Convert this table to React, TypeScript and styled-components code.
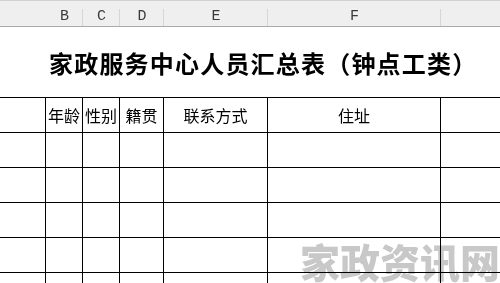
import React from "react";
import styled, { createGlobalStyle } from "styled-components";

const Global = createGlobalStyle`
  html, body { margin: 0; padding: 0; background: #fff; }
  body { width: 500px; height: 283px; overflow: hidden; }
`;

const COLS = "46px 37px 37px 44px 104px 173px 1fr";

const Sheet = styled.div`
  position: relative;
  width: 500px;
  height: 283px;
  overflow: hidden;
  background: #fff;
  font-family: "Noto Sans CJK SC", "Noto Sans", sans-serif;
`;

const ColHeader = styled.div`
  display: grid;
  grid-template-columns: ${COLS};
  height: 25px;
  background: #efefef;
  border-top: 1px solid #d2d2d2;
  border-bottom: 1px solid #a9a9a9;
`;

const ColLabel = styled.div<{ $sep?: boolean }>`
  position: relative;
  display: flex;
  align-items: flex-end;
  justify-content: center;
  padding-bottom: 2px;
  box-sizing: border-box;
  font-family: "Liberation Mono", "Courier New", monospace;
  font-size: 15px;
  line-height: 15px;
  color: #3a3a3a;
  &::after {
    content: "";
    display: ${(p) => (p.$sep ? "block" : "none")};
    position: absolute;
    right: 0;
    top: 8px;
    bottom: 0;
    width: 1px;
    background: #d6d6d6;
  }
`;

const TitleRow = styled.div`
  height: 70px;
  display: flex;
  align-items: center;
  padding: 2px 0 0 49px;
  box-sizing: border-box;
`;

const Title = styled.h1`
  margin: 0;
  font-size: 24px;
  font-weight: 700;
  letter-spacing: 1.2px;
  color: #000;
  white-space: nowrap;
  line-height: 1;
`;

const Table = styled.div`
  border-top: 1px solid #000;
`;

const Row = styled.div`
  display: grid;
  grid-template-columns: ${COLS};
  height: 35px;
  box-sizing: border-box;
  border-bottom: 1px solid #000;
`;

const Cell = styled.div<{ $last?: boolean }>`
  display: flex;
  align-items: center;
  justify-content: center;
  box-sizing: border-box;
  border-right: ${(p) => (p.$last ? "none" : "1px solid #000")};
  font-size: 16px;
  font-weight: 400;
  color: #000;
  white-space: nowrap;
  overflow: hidden;
`;

const Watermark = styled.div`
  position: absolute;
  left: 300px;
  top: 241px;
  font-family: "Noto Sans CJK SC", sans-serif;
  font-size: 40px;
  font-weight: 900;
  line-height: 1;
  color: #c8c8c8;
  white-space: nowrap;
  mix-blend-mode: multiply;
`;

const letters = ["", "B", "C", "D", "E", "F", ""];
const heads = ["", "年龄", "性别", "籍贯", "联系方式", "住址", ""];

export default function App() {
  return (
    <Sheet>
      <Global />
      <ColHeader>
        {letters.map((l, i) => (
          <ColLabel key={i} $sep={i > 0 && i < 6}>
            {l}
          </ColLabel>
        ))}
      </ColHeader>
      <TitleRow>
        <Title>家政服务中心人员汇总表（钟点工类）</Title>
      </TitleRow>
      <Table>
        <Row>
          {heads.map((h, i) => (
            <Cell key={i} $last={i === 6}>
              {h}
            </Cell>
          ))}
        </Row>
        {[0, 1, 2, 3, 4].map((r) => (
          <Row key={r}>
            {heads.map((_, i) => (
              <Cell key={i} $last={i === 6} />
            ))}
          </Row>
        ))}
      </Table>
      <Watermark>家政资讯网</Watermark>
    </Sheet>
  );
}
